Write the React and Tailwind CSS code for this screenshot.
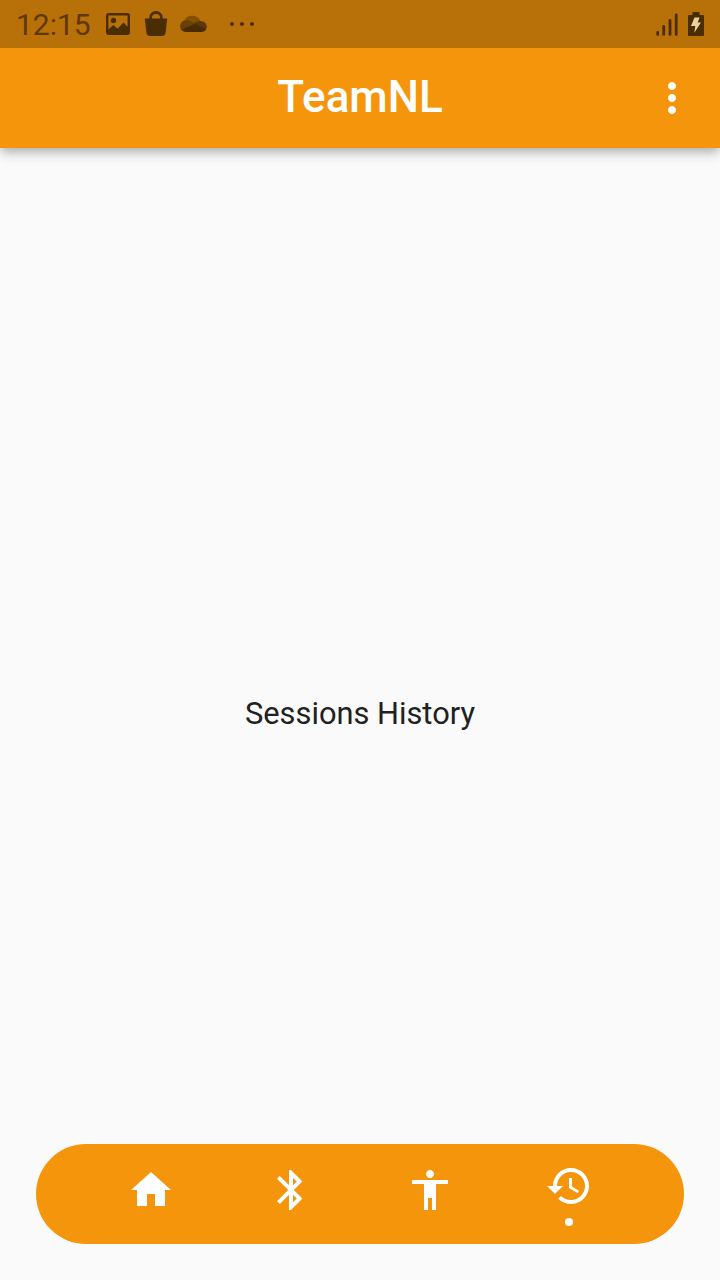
function Icon({ d, className }) {
  return (
    <svg viewBox="0 0 24 24" className={className} fill="currentColor" aria-hidden="true">
      <path d={d} />
    </svg>
  );
}

const tabs = [
  { name: 'home', d: 'M10 20v-6h4v6h5v-8h3L12 3 2 12h3v8z' },
  {
    name: 'bluetooth',
    d: 'M17.71 7.71 12 2h-1v7.59L6.41 5 5 6.41 10.59 12 5 17.59 6.41 19 11 14.41V22h1l5.71-5.71-4.3-4.29 4.3-4.29zM13 5.83l1.88 1.88L13 9.59V5.83zm1.88 10.46L13 18.17v-3.76l1.88 1.88z',
  },
  {
    name: 'body',
    d: 'M12 2c1.1 0 2 .9 2 2s-.9 2-2 2-2-.9-2-2 .9-2 2-2zm9 7h-6v13h-2v-6h-2v6H9V9H3V7h18v2z',
  },
  {
    name: 'history',
    active: true,
    d: 'M13 3c-4.97 0-9 4.03-9 9H1l3.89 3.89.07.14L9 12H6c0-3.87 3.13-7 7-7s7 3.13 7 7-3.13 7-7 7c-1.93 0-3.68-.79-4.94-2.06l-1.42 1.42C8.27 19.99 10.51 21 13 21c4.97 0 9-4.03 9-9s-4.03-9-9-9zm-1 5v5l4.28 2.54.72-1.21-3.5-2.08V8H12z',
  },
];

function StatusBar() {
  return (
    <div className="flex h-12 shrink-0 items-center justify-between bg-[#b87008] pl-4 pr-4 text-[#4b2d03]">
      <div className="flex items-center">
        <span className="w-[90px] pt-0.5 text-[30px] leading-none text-[#5f3804]">12:15</span>
        <svg viewBox="0 0 24 24" className="h-6 w-6" aria-hidden="true">
          <rect x="1.2" y="2.2" width="21.600" height="19.600" rx="1.5" fill="none" stroke="currentColor" strokeWidth="2.400" />
          <circle cx="7.5" cy="8.5" r="2.7" fill="currentColor" />
          <path d="M1 18.5 7.5 13l4 3.8L17.5 10.500l5.500 5.500v6H1z" fill="currentColor" />
        </svg>
        <svg viewBox="0 0 24 26" className="ml-3.5 h-[26px] w-6" aria-hidden="true">
          <path d="M.8 7.500h22.400l-1.600 14Q21.200 25 17.500 25h-11Q2.800 25 2.400 21.500z" fill="currentColor" />
          <path d="M6.500 9V7a5.500 5.500 0 0 1 11 0V9" fill="none" stroke="currentColor" strokeWidth="2.800" />
        </svg>
        <svg viewBox="0 0 26 24" preserveAspectRatio="none" className="ml-3 h-6 w-[27px]" aria-hidden="true">
          <path d="M4 9C5 5.500 8 3.800 11.500 3.800c4 0 7 2.200 8.300 5.700L14 15z" fill="#845006" />
          <path d="M6 20A5.700 5.700 0 0 1 5.800 8.200c2-.2 3.800.4 5.700 1.600l6 3.700-9 6z" fill="#6b4005" />
          <path d="M12 13.500c2-3.200 4.500-4.500 7.500-4.400 3.800.1 6.300 2.500 6.300 5.600 0 1.300-.4 2.400-1.200 3.300z" fill="#5d3704" />
          <path d="M1.300 17.600 14.500 12 25.200 17.300c-.9 1.800-2.500 2.700-4.700 2.700H6.300c-2.100 0-3.900-.8-5-2.400z" fill="#482b02" />
        </svg>
        <span className="ml-[23px] flex gap-1.5">
          <i className="h-1 w-1 rounded-full bg-current" />
          <i className="h-1 w-1 rounded-full bg-current" />
          <i className="h-1 w-1 rounded-full bg-current" />
        </span>
      </div>
      <div className="flex items-center gap-2.5">
        <svg viewBox="0 0 22 24" className="h-6 w-[22px]" stroke="currentColor" strokeWidth="2.800" strokeLinecap="round" aria-hidden="true">
          <path d="M1.700 20.500V22.400M7.700 14.500v7.900M14 8.500v13.900M20.200 2.800v19.600" />
        </svg>
        <svg viewBox="0 0 16 24" className="h-6 w-4" aria-hidden="true">
          <path d="M4.500 0h7v3H15q1 0 1 1v19q0 1-1 1H1q-1 0-1-1V4q0-1 1-1h3.500z" fill="currentColor" />
          <path d="M6.500 5.500h5L9.800 10.500H13L6.300 20.700 7.300 14H3z" fill="#edcf9e" />
        </svg>
      </div>
    </div>
  );
}

export default function App() {
  return (
    <div className="flex h-[1280px] w-[720px] flex-col overflow-hidden bg-[#fafafa] font-['Roboto',sans-serif]">
      <div className="relative shadow-[0_4px_8px_-2px_rgba(0,0,0,0.2),0_8px_10px_rgba(0,0,0,0.1),0_2px_16px_rgba(0,0,0,0.06)]">
        <StatusBar />
        <header className="grid h-[100px] grid-cols-[96px_1fr_96px] items-center bg-[#f5950c] text-white">
          <h1 className="col-start-2 pb-0.5 text-center text-[44px] font-medium leading-[52px]">TeamNL</h1>
          <button className="flex justify-center" aria-label="More options">
            <Icon className="h-12 w-12" d="M12 8c1.100 0 2-.9 2-2s-.9-2-2-2-2 .9-2 2 .9 2 2 2zm0 2c-1.100 0-2 .9-2 2s.9 2 2 2 2-.9 2-2-.9-2-2-2zm0 6c-1.100 0-2 .9-2 2s.9 2 2 2 2-.9 2-2-.9-2-2-2z" />
          </button>
        </header>
      </div>
      <main className="flex flex-1 items-center justify-center pt-[136px]">
        <p className="text-[30.8px] leading-9 text-[#212121]">Sessions History</p>
      </main>
      <nav className="mx-9 mb-9 grid h-[100px] shrink-0 grid-cols-4 rounded-full bg-[#f5950c] pl-[45.700px] pr-[45.300px] text-white">
        {tabs.map((tab) => (
          <button
            key={tab.name}
            aria-label={tab.name}
            className={tab.active ? 'flex flex-col items-center pt-[18px]' : 'flex flex-col items-center pt-[22px]'}
          >
            <Icon d={tab.d} className="h-12 w-12" />
            {tab.active && <span className="mt-2 h-2 w-2 rounded-full bg-white" />}
          </button>
        ))}
      </nav>
    </div>
  );
}
